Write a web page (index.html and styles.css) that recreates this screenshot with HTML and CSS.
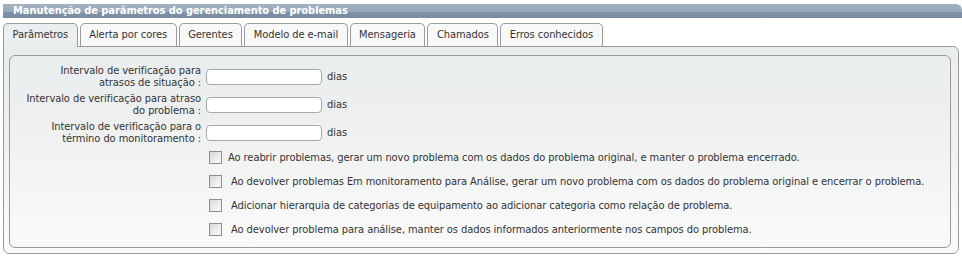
FILE: index.html
```html
<!DOCTYPE html>
<html lang="pt-BR">
<head>
<meta charset="utf-8">
<title>Manutenção de parâmetros do gerenciamento de problemas</title>
<link rel="stylesheet" href="styles.css">
</head>
<body>
<div class="window">
  <div class="titlebar">Manutenção de parâmetros do gerenciamento de problemas</div>
  <div class="tabs">
    <div class="tab active">Parâmetros</div>
    <div class="tab">Alerta por cores</div>
    <div class="tab">Gerentes</div>
    <div class="tab">Modelo de e-mail</div>
    <div class="tab">Mensageria</div>
    <div class="tab">Chamados</div>
    <div class="tab">Erros conhecidos</div>
  </div>
  <div class="panel">
    <div class="inner">
      <div class="field">
        <label class="label">Intervalo de verificação para<br>atrasos de situação :</label>
        <input class="text" type="text">
        <span class="unit">dias</span>
      </div>
      <div class="field">
        <label class="label">Intervalo de verificação para atraso<br>do problema :</label>
        <input class="text" type="text">
        <span class="unit">dias</span>
      </div>
      <div class="field">
        <label class="label">Intervalo de verificação para o<br>término do monitoramento :</label>
        <input class="text" type="text">
        <span class="unit">dias</span>
      </div>
      <div class="checks">
        <label class="check"><input type="checkbox" class="box"><span>Ao reabrir problemas, gerar um novo problema com os dados do problema original, e manter o problema encerrado.</span></label>
        <label class="check"><input type="checkbox" class="box"><span class="pad">Ao devolver problemas Em monitoramento para Análise, gerar um novo problema com os dados do problema original e encerrar o problema.</span></label>
        <label class="check"><input type="checkbox" class="box"><span class="pad">Adicionar hierarquia de categorias de equipamento ao adicionar categoria como relação de problema.</span></label>
        <label class="check"><input type="checkbox" class="box"><span class="pad">Ao devolver problema para análise, manter os dados informados anteriormente nos campos do problema.</span></label>
      </div>
    </div>
  </div>
</div>
</body>
</html>
```

FILE: styles.css
```css
html, body {
  margin: 0;
  padding: 0;
  background: #ffffff;
}
body {
  font-family: "DejaVu Sans Condensed", "DejaVu Sans", sans-serif;
  font-size: 11px;
  letter-spacing: -0.06px;
  color: #333333;
}
.window {
  padding: 4px 0 0 3px;
}
.titlebar {
  height: 14px;
  line-height: 14px;
  padding-left: 10px;
  color: #ffffff;
  font-weight: bold;
  font-size: 11px;
  border-radius: 0 6px 0 0;
  background: linear-gradient(#a2b2c2 0, #97a8ba 55%, #7f91a7 60%, #7a8ca2 100%);
  overflow: hidden;
  white-space: nowrap;
}
.tabs {
  display: flex;
  gap: 2px;
  margin-top: 5px;
  position: relative;
  z-index: 1;
}
.tab {
  height: 22px;
  line-height: 22px;
  padding: 0 8.5px;
  border: 1px solid #9a9a9a;
  border-bottom: none;
  border-radius: 5px 5px 0 0;
  background: #f8f8f8;
  white-space: nowrap;
}
.tab.active {
  background: #eceff0;
  height: 23px;
  margin-bottom: -1px;
}
.panel {
  width: 942px;
  border: 1px solid #9a9a9a;
  border-radius: 0 6px 6px 6px;
  padding: 8px 7px 5px 5px;
  background: linear-gradient(#e9eded 0, #eef0f0 35%, #fafafa 100%);
}
.inner {
  border: 1px solid #9a9a9a;
  border-radius: 6px;
  padding: 9px 0 6px 0;
}
.field {
  display: flex;
  align-items: center;
  height: 24px;
  margin-bottom: 4px;
}
.label {
  width: 191px;
  text-align: right;
  line-height: 12px;
  flex: none;
}
.text {
  width: 112px;
  height: 14px;
  margin: 0 5px 0 5px;
  padding: 0 1px;
  border: 1px solid #a8a8a8;
  border-radius: 4px;
  background: #ffffff;
  font: inherit;
}
.unit {
  line-height: 12px;
}
.checks {
  margin-top: -4px;
  padding-left: 199px;
}
.check {
  display: flex;
  align-items: center;
  height: 24px;
  white-space: nowrap;
}
.box {
  appearance: none;
  -webkit-appearance: none;
  width: 13px;
  height: 13px;
  margin: 0 6px 0 0;
  border: 1px solid #8e8e8e;
  background: linear-gradient(135deg, #d8d8d8 0, #eeeeee 60%, #f7f7f7 100%);
  flex: none;
}
.pad {
  padding-left: 3px;
}
```
